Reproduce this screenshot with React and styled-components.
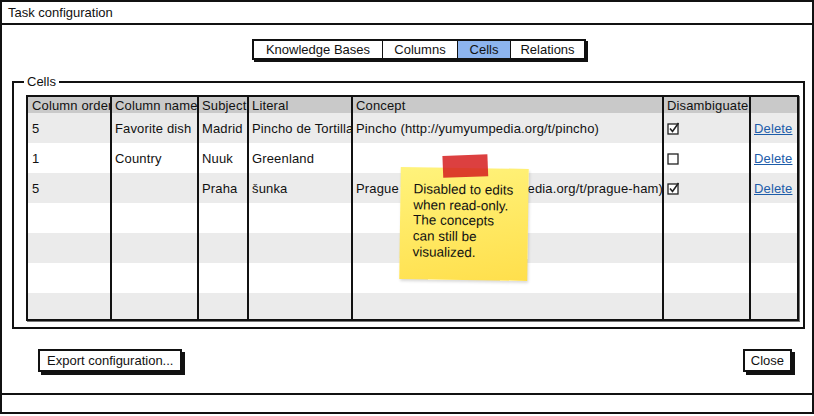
import React from "react";
import styled, { createGlobalStyle } from "styled-components";

const GlobalStyle = createGlobalStyle`
  body {
    margin: 0;
    background: #fff;
    font-family: "Liberation Sans", Arial, sans-serif;
    font-size: 13px;
    color: #111;
  }
`;

const Window = styled.div`
  position: relative;
  box-sizing: border-box;
  width: 814px;
  height: 414px;
  border: 2px solid #111;
  display: flex;
  flex-direction: column;
  background: #fff;
`;

const TitleBar = styled.div`
  height: 21px;
  border-bottom: 2px solid #111;
  display: flex;
  align-items: center;
  padding-left: 6px;
`;

const Body = styled.div`
  flex: 1;
  display: flex;
  flex-direction: column;
  padding: 14px 7px 0 10px;
`;

const Tabs = styled.div`
  display: flex;
  align-self: flex-start;
  margin-left: 240px;
  border: 2px solid #111;
  box-shadow: 2px 2px 0 #111;
  height: 17px;
`;

const Tab = styled.div`
  box-sizing: border-box;
  width: ${(p) => p.$w}px;
  display: flex;
  align-items: center;
  justify-content: center;
  background: ${(p) => (p.$active ? "#8db4ee" : "#fff")};
  border-left: ${(p) => (p.$first ? "none" : "1px solid #111")};
`;

const Group = styled.fieldset`
  margin: 14px 0 0 0;
  padding: 6px 4px 6px 12px;
  border: 2px solid #111;
  min-width: 0;
`;

const Legend = styled.legend`
  margin-left: -2px;
  padding: 0 3px;
  line-height: 15px;
`;

const Grid = styled.div`
  border: 2px solid #111;
  height: 222px;
  overflow: hidden;
  box-shadow: 1px 1px 0 #777;
`;

const cols = "82px 87px 50px 104px 311px 87px 48px";

const HeadRow = styled.div`
  display: grid;
  grid-template-columns: ${cols};
  height: 16px;
  background: #c9c9c9;
`;

const Row = styled.div`
  display: grid;
  grid-template-columns: ${cols};
  height: 30px;
  background: ${(p) => (p.$odd ? "#ebebeb" : "#fff")};
`;

const Cell = styled.div`
  display: flex;
  align-items: center;
  padding-left: ${(p) => (p.$first ? 4 : 3)}px;
  border-left: ${(p) => (p.$first ? "none" : "2px solid #111")};
  white-space: nowrap;
  overflow: hidden;
  line-height: 15px;
  letter-spacing: 0.15px;
`;

const LinkText = styled.span`
  color: #1c5ca9;
  text-decoration: underline;
`;

const Buttons = styled.div`
  display: flex;
  justify-content: space-between;
  margin-top: 20px;
  padding: 0 13px 0 26px;
`;

const Button = styled.div`
  height: 19px;
  padding: 0 ${(p) => p.$pad}px;
  border: 2px solid #111;
  box-shadow: 3px 3px 0 #111;
  display: flex;
  align-items: center;
  background: #fff;
`;

const StatusBar = styled.div`
  height: 17px;
  border-top: 2px solid #111;
`;

const Sticky = styled.div`
  position: absolute;
  left: 398px;
  top: 166px;
  width: 128px;
  height: 112px;
  box-sizing: border-box;
  padding: 14px 6px 0 13px;
  background: linear-gradient(170deg, #fff37c 0%, #ffe55a 70%, #ffdf4c 100%);
  box-shadow: 1px 2px 3px rgba(0, 0, 0, 0.15);
  transform: rotate(0.8deg);
  line-height: 15.7px;
  font-size: 13.5px;
  color: #111;
`;

const Tape = styled.div`
  position: absolute;
  left: 42px;
  top: -13px;
  width: 45px;
  height: 22px;
  background: rgba(214, 30, 30, 0.85);
  transform: rotate(-3deg);
`;

const Check = ({ on }) => (
  <svg width="13" height="13" viewBox="0 0 13 13">
    <rect x="1" y="2" width="10" height="10" fill="#fff" stroke="#222" strokeWidth="1.3" />
    {on && <path d="M3 6.5 L5.5 9.5 L11.5 1" fill="none" stroke="#222" strokeWidth="1.6" />}
  </svg>
);

const headers = ["Column order", "Column name", "Subject", "Literal", "Concept", "Disambiguate", ""];

const rows = [
  ["5", "Favorite dish", "Madrid", "Pincho de Tortilla", "Pincho (http://yumyumpedia.org/t/pincho)", true],
  ["1", "Country", "Nuuk", "Greenland", "", false],
  ["5", "", "Praha", "šunka", "Prague ham (http://yumyumpedia.org/t/prague-ham)", true],
  null,
  null,
  null,
  null,
];

const App = () => (
  <>
    <GlobalStyle />
    <Window>
      <TitleBar>Task configuration</TitleBar>
      <Body>
        <Tabs>
          <Tab $first $w={128}>Knowledge Bases</Tab>
          <Tab $w={75}>Columns</Tab>
          <Tab $w={53} $active>Cells</Tab>
          <Tab $w={74}>Relations</Tab>
        </Tabs>
        <Group>
          <Legend>Cells</Legend>
          <Grid>
            <HeadRow>
              {headers.map((h, i) => (
                <Cell key={i} $first={i === 0}>{h}</Cell>
              ))}
            </HeadRow>
            {rows.map((r, i) => (
              <Row key={i} $odd={i % 2 === 0}>
                <Cell $first>{r && r[0]}</Cell>
                <Cell>{r && r[1]}</Cell>
                <Cell>{r && r[2]}</Cell>
                <Cell>{r && r[3]}</Cell>
                <Cell>{r && r[4]}</Cell>
                <Cell>{r && <Check on={r[5]} />}</Cell>
                <Cell>{r && <LinkText>Delete</LinkText>}</Cell>
              </Row>
            ))}
          </Grid>
        </Group>
        <Buttons>
          <Button $pad={7}>Export configuration...</Button>
          <Button $pad={6}>Close</Button>
        </Buttons>
      </Body>
      <StatusBar />
      <Sticky>
        <Tape />
        Disabled to edits
        <br />
        when read-only.
        <br />
        The concepts
        <br />
        can still be
        <br />
        visualized.
      </Sticky>
    </Window>
  </>
);

export default App;
